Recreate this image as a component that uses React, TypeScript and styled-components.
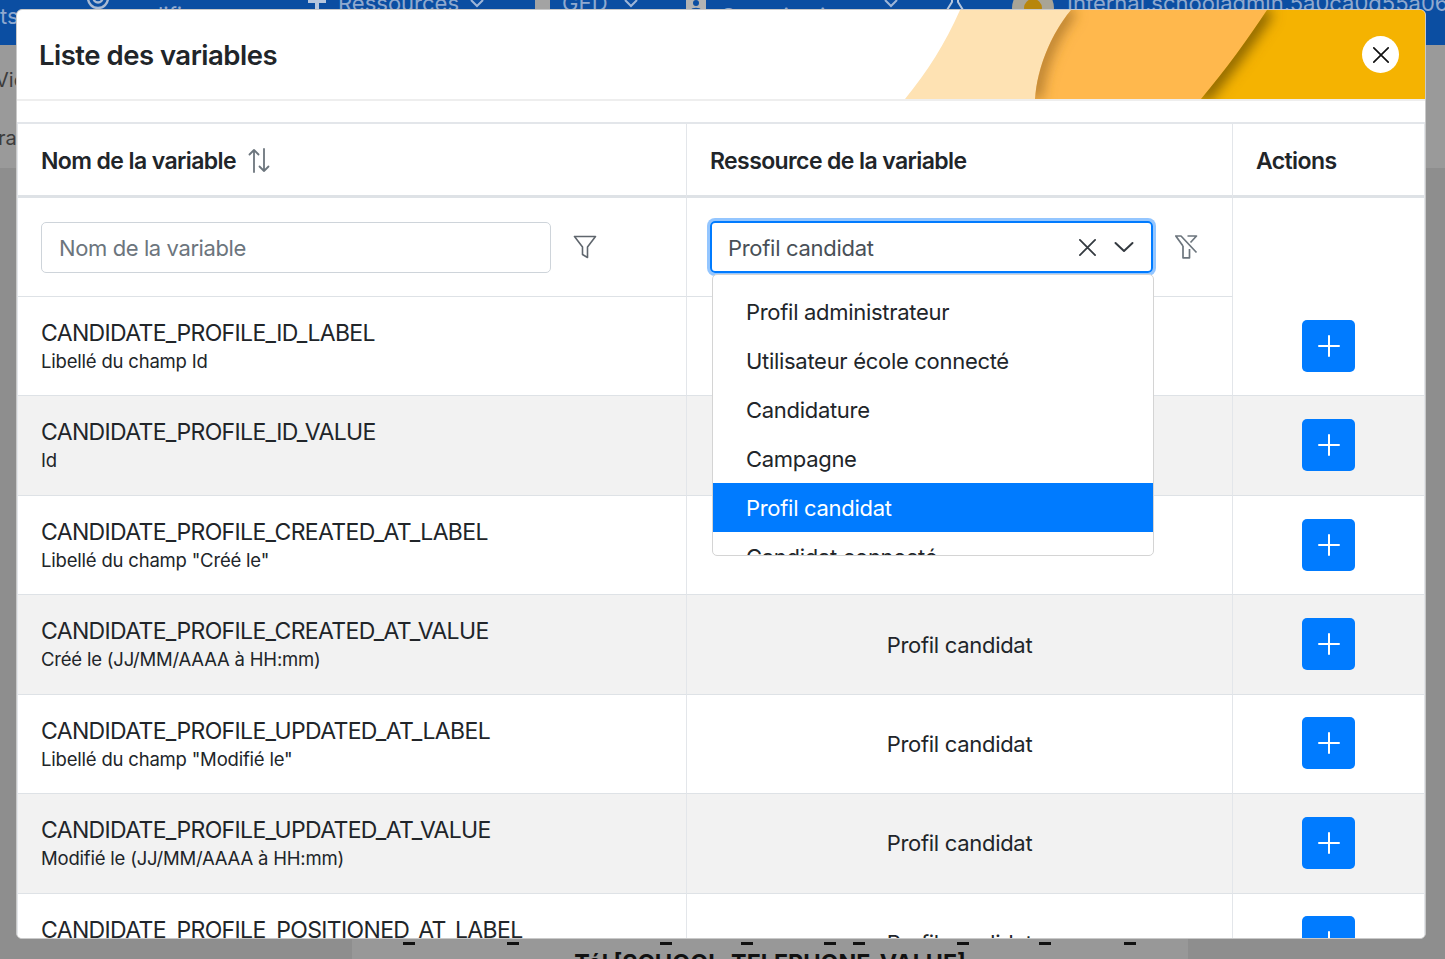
import React from 'react';
import styled, { createGlobalStyle } from 'styled-components';

const GlobalStyle = createGlobalStyle`
  html, body {
    margin: 0;
    padding: 0;
    height: 100%;
    overflow: hidden;
    background: #8e8e8e;
    font-family: Inter, "Liberation Sans", sans-serif;
    color: #212529;
  }
  * {
    box-sizing: border-box;
  }
`;

const Page = styled.div`
  position: relative;
  width: 1445px;
  height: 959px;
  overflow: hidden;
  display: flex;
  flex-direction: column;
  background: #8e8e8e;
`;

const NavBar = styled.header`
  height: 45px;
  background: #0b4ea2;
  color: #8fa9cf;
  font-size: 22px;
  overflow: hidden;
  display: flex;
  flex-shrink: 0;
`;

const NavItem = styled.span<{ $width: number; $top?: number }>`
  width: ${(p) => p.$width}px;
  flex-shrink: 0;
  margin-top: ${(p) => p.$top ?? -10}px;
  white-space: nowrap;
  line-height: 26px;
`;

const NavGlyph = styled.svg`
  display: block;
`;

const NavSquare = styled.div`
  width: 15px;
  height: 12px;
  margin-top: 10px;
  background: #a3a3a3;
`;

const TopBand = styled.div`
  height: 123px;
  background: #9a9a9a;
  flex-shrink: 0;
  color: #3c3c3c;
  font-size: 20px;
  display: flex;
  flex-direction: column;
  gap: 34px;
  padding-top: 23px;
`;

const BandText = styled.span<{ $shift: number }>`
  margin-left: ${(p) => p.$shift}px;
  line-height: 24px;
`;

const Sheet = styled.div`
  flex: 1;
  min-height: 0;
  margin: 0 257px 0 352px;
  background: #989898;
  display: flex;
  flex-direction: column;
  justify-content: flex-end;
`;

const DashRow = styled.div`
  display: flex;
  height: 3px;
  margin-bottom: 4px;
`;

const Dash = styled.span<{ $offset: number }>`
  width: 12px;
  height: 3px;
  margin-left: ${(p) => p.$offset}px;
  background: #111;
`;

const SheetText = styled.div`
  font-size: 23.3px;
  line-height: 28px;
  font-weight: 700;
  color: #111;
  white-space: nowrap;
  text-align: center;
  margin-bottom: -18px;
`;

const Modal = styled.div`
  position: absolute;
  left: 16px;
  top: 9px;
  width: 1410px;
  height: 930px;
  background: #fff;
  border: 1px solid #c9c9c9;
  border-radius: 6px;
  overflow: hidden;
  display: flex;
  flex-direction: column;
`;

const ModalHeader = styled.div`
  position: relative;
  height: 91px;
  flex-shrink: 0;
  border-bottom: 2px solid #eeeeee;
  display: flex;
  align-items: center;
  justify-content: space-between;
  padding: 0 26px 0 22px;
`;

const ModalTitle = styled.h1`
  position: relative;
  margin: 0;
  font-size: 27.5px;
  font-weight: 600;
  letter-spacing: -0.5px;
  color: #212529;
`;

const Wave = styled.svg`
  position: absolute;
  right: 0;
  top: 0;
  width: 520px;
  height: 89px;
`;

const CloseButton = styled.button`
  position: relative;
  width: 37px;
  height: 37px;
  border: 0;
  padding: 0;
  border-radius: 50%;
  background: #fff;
  display: flex;
  align-items: center;
  justify-content: center;
`;

const Table = styled.div`
  margin-top: 21px;
  position: relative;
  display: grid;
  grid-template-columns: 669px 546px 191px;
  border-top: 2px solid #e3e6ea;
  border-left: 1px solid #e3e6ea;
  border-right: 1px solid #e3e6ea;
`;

const HeadCell = styled.div`
  height: 74px;
  border-bottom: 3px solid #dee2e6;
  border-right: 1px solid #e3e6ea;
  font-size: 23px;
  font-weight: 600;
  letter-spacing: -0.6px;
  padding: 2px 23px 0;
  display: flex;
  align-items: center;
  gap: 12px;
  &:nth-child(3n) {
    border-right: 0;
  }
`;

const FilterCell = styled.div<{ $last?: boolean }>`
  height: 99px;
  border-bottom: ${(p) => (p.$last ? '0' : '1px solid #dee2e6')};
  border-right: ${(p) => (p.$last ? '0' : '1px solid #e3e6ea')};
  padding: 0 22px 0 23px;
  display: flex;
  align-items: center;
  gap: 22px;
`;

const TextFilter = styled.input`
  width: 510px;
  height: 51px;
  border: 1px solid #ced4da;
  border-radius: 5px;
  font: inherit;
  font-size: 22px;
  letter-spacing: -0.4px;
  padding: 2px 17px 0;
  color: #495057;
  &::placeholder {
    color: #6c757d;
    opacity: 1;
  }
`;

const SelectBox = styled.div`
  width: 443px;
  height: 52px;
  border: 2px solid #007bff;
  box-shadow: 0 0 0 3px #94c6ff;
  border-radius: 5px;
  font-size: 22px;
  letter-spacing: -0.3px;
  color: #495057;
  padding: 0 17px 0 16px;
  display: flex;
  align-items: center;
`;

const SelectValue = styled.span`
  flex: 1;
  padding-top: 2px;
`;

const SelectIcons = styled.span`
  display: flex;
  align-items: center;
  gap: 17px;
`;

const Menu = styled.ul`
  position: absolute;
  left: 694px;
  top: 150px;
  width: 442px;
  height: 282px;
  margin: 0;
  padding: 12px 0 0;
  list-style: none;
  background: #fff;
  border: 1px solid #d4d4d4;
  border-radius: 5px;
  overflow: hidden;
  z-index: 2;
`;

const MenuOption = styled.li<{ $active?: boolean }>`
  height: 49px;
  line-height: 51px;
  padding-left: 33px;
  font-size: 22px;
  letter-spacing: -0.3px;
  white-space: nowrap;
  color: ${(p) => (p.$active ? '#fff' : '#212529')};
  background: ${(p) => (p.$active ? '#007bff' : 'transparent')};
`;

const Cell = styled.div<{ $shaded: boolean }>`
  height: 99.45px;
  background: ${(p) => (p.$shaded ? '#f2f2f2' : '#fff')};
  border-bottom: 1px solid #dee2e6;
  border-right: 1px solid #e3e6ea;
`;

const NameCell = styled(Cell)`
  padding: 23px 23px 0;
`;

const VarName = styled.div`
  font-size: 23px;
  line-height: 27px;
  letter-spacing: -0.65px;
  color: #212529;
`;

const VarLabel = styled.div`
  font-size: 18.5px;
  line-height: 28px;
  letter-spacing: -0.2px;
  color: #212529;
`;

const ResourceCell = styled(Cell)`
  display: flex;
  align-items: center;
  justify-content: center;
  font-size: 22px;
  letter-spacing: -0.3px;
  color: #212529;
`;

const ActionCell = styled(Cell)`
  border-right: 0;
  display: flex;
  align-items: center;
  padding: 0 0 1px 69px;
`;

const AddButton = styled.button`
  width: 53px;
  height: 52px;
  border: 0;
  padding: 0;
  border-radius: 5px;
  background: #007bff;
  display: flex;
  align-items: center;
  justify-content: center;
`;

const rows = [
  ['CANDIDATE_PROFILE_ID_LABEL', 'Libellé du champ Id'],
  ['CANDIDATE_PROFILE_ID_VALUE', 'Id'],
  ['CANDIDATE_PROFILE_CREATED_AT_LABEL', 'Libellé du champ "Créé le"'],
  ['CANDIDATE_PROFILE_CREATED_AT_VALUE', 'Créé le (JJ/MM/AAAA à HH:mm)'],
  ['CANDIDATE_PROFILE_UPDATED_AT_LABEL', 'Libellé du champ "Modifié le"'],
  ['CANDIDATE_PROFILE_UPDATED_AT_VALUE', 'Modifié le (JJ/MM/AAAA à HH:mm)'],
  ['CANDIDATE_PROFILE_POSITIONED_AT_LABEL', 'Libellé du champ "Positionné le"'],
];

const options = [
  'Profil administrateur',
  'Utilisateur école connecté',
  'Candidature',
  'Campagne',
  'Profil candidat',
  'Candidat connecté',
];

const dashOffsets = [51, 92, 141, 69, 71, 17, 92, 70, 73];

const CrossIcon = ({ size, color }: { size: number; color: string }) => (
  <svg width={size} height={size} viewBox="0 0 20 20" fill="none" stroke={color} strokeWidth="1.9" strokeLinecap="round">
    <path d="M2 2 L18 18 M18 2 L2 18" />
  </svg>
);

const PlusIcon = () => (
  <svg width="24" height="24" viewBox="0 0 24 24" fill="none" stroke="#fff" strokeWidth="2" strokeLinecap="round">
    <path d="M12 2 V22 M2 12 H22" />
  </svg>
);

const ChevronIcon = () => (
  <svg width="20" height="12" viewBox="0 0 20 12" fill="none" stroke="#343a40" strokeWidth="2" strokeLinecap="round" strokeLinejoin="round">
    <path d="M1.5 2 L10 10 L18.5 2" />
  </svg>
);

const NavChevron = () => (
  <NavGlyph width="14" height="10" viewBox="0 0 14 10" fill="none" stroke="#9fb6d8" strokeWidth="2">
    <path d="M1 0 L7 6 L13 0" />
  </NavGlyph>
);

const SortIcon = () => (
  <svg width="22" height="25" viewBox="0 0 22 25" fill="none" stroke="#6c757d" strokeWidth="1.8" strokeLinecap="round" strokeLinejoin="round">
    <path d="M6 24 V2 M1.5 6.5 L6 2 L10.5 6.5" />
    <path d="M16 1 V23 M11.5 18.5 L16 23 L20.5 18.5" />
  </svg>
);

const FunnelIcon = () => (
  <svg width="24" height="24" viewBox="0 0 24 24" fill="none" stroke="#5f666d" strokeWidth="1.6" strokeLinejoin="round">
    <path d="M1.5 1.5 H22.5 L14.5 12 V22.5 L9.5 19.5 V12 Z" />
  </svg>
);

const FunnelClearIcon = () => (
  <svg width="24" height="24" viewBox="0 0 24 24" fill="none" stroke="#6c757d" strokeWidth="1.7" strokeLinejoin="round">
    <path d="M8 11 L0.8 1 H6 L21.5 17.5" />
    <path d="M8 11 V22.8 H14.5 V14" />
    <path d="M12.5 1 H21.5 L15.5 7.5" />
  </svg>
);

const App: React.FC = () => {
  return (
    <Page>
      <GlobalStyle />
      <NavBar>
        <NavItem $width={86} $top={3}>
          ts
        </NavItem>
        <NavItem $width={72} $top={-14}>
          <NavGlyph width="24" height="24" viewBox="0 0 24 24" fill="none" stroke="#a9bad3" strokeWidth="2.4">
            <circle cx="12" cy="12" r="10" />
            <circle cx="12" cy="12" r="4.5" />
          </NavGlyph>
        </NavItem>
        <NavItem $width={150} $top={2}>
          lifi
        </NavItem>
        <NavItem $width={30} $top={0}>
          <NavGlyph width="18" height="10" viewBox="0 0 18 10" fill="#b6c6dd">
            <path d="M0 0 H18 V3 H11 V10 H7 V3 H0 Z" />
          </NavGlyph>
        </NavItem>
        <NavItem $width={132}>Ressources</NavItem>
        <NavItem $width={65} $top={0}>
          <NavChevron />
        </NavItem>
        <NavItem $width={27} $top={-10}>
          <NavSquare />
        </NavItem>
        <NavItem $width={62}>GED</NavItem>
        <NavItem $width={62} $top={0}>
          <NavChevron />
        </NavItem>
        <NavItem $width={34} $top={0}>
          <NavGlyph width="20" height="10" viewBox="0 0 20 10" fill="#b3b3b3">
            <rect width="20" height="10" />
            <circle cx="10" cy="3" r="3" fill="#0b4ea2" />
            <path d="M5 10 C5 7 15 7 15 10 Z" fill="#0b4ea2" />
          </NavGlyph>
        </NavItem>
        <NavItem $width={164} $top={3}>
          Organisation
        </NavItem>
        <NavItem $width={62} $top={0}>
          <NavChevron />
        </NavItem>
        <NavItem $width={65} $top={0}>
          <NavGlyph width="18" height="10" viewBox="0 0 18 10" fill="none" stroke="#b6c6dd" strokeWidth="2">
            <path d="M6 0 V2 L1 10 M12 0 V2 L17 10" />
          </NavGlyph>
        </NavItem>
        <NavItem $width={56} $top={-14}>
          <NavGlyph width="44" height="30" viewBox="0 0 44 30">
            <circle cx="22" cy="22" r="21" fill="#a8a496" />
            <circle cx="22" cy="22" r="9" fill="#b8860b" />
          </NavGlyph>
        </NavItem>
        <NavItem $width={378}>Internal.schooladmin.5a0ca0d55a064</NavItem>
      </NavBar>
      <TopBand>
        <BandText $shift={-5}>Vie</BandText>
        <BandText $shift={-2}>ra</BandText>
      </TopBand>
      <Sheet>
        <DashRow>
          {dashOffsets.map((offset, i) => (
            <Dash key={i} $offset={offset} />
          ))}
        </DashRow>
        <SheetText>Tél [SCHOOL_TELEPHONE_VALUE]</SheetText>
      </Sheet>

      <Modal>
        <ModalHeader>
          <Wave viewBox="0 0 520 89" preserveAspectRatio="none">
            <defs>
              <clipPath id="orangeClip">
                <path d="M130 89 C132 58 146 24 166 0 H520 V89 Z" />
              </clipPath>
              <clipPath id="amberClip">
                <path d="M296 89 C322 58 342 30 362 0 H520 V89 Z" />
              </clipPath>
              <filter id="soft" x="-50%" y="-50%" width="200%" height="200%">
                <feGaussianBlur stdDeviation="7" />
              </filter>
            </defs>
            <path d="M0 89 C22 62 40 34 55 0 H520 V89 Z" fill="#fee2b3" />
            <path d="M130 89 C132 58 146 24 166 0 H520 V89 Z" fill="#ffb84d" />
            <g clipPath="url(#orangeClip)">
              <path d="M130 89 C132 58 146 24 166 0" fill="none" stroke="#a9752c" strokeWidth="12" filter="url(#soft)" />
            </g>
            <path d="M296 89 C322 58 342 30 362 0 H520 V89 Z" fill="#f5b301" />
            <g clipPath="url(#amberClip)">
              <path d="M296 89 C322 58 342 30 362 0" fill="none" stroke="#7d5a04" strokeWidth="14" filter="url(#soft)" />
            </g>
          </Wave>
          <ModalTitle>Liste des variables</ModalTitle>
          <CloseButton aria-label="Fermer">
            <CrossIcon size={18} color="#111" />
          </CloseButton>
        </ModalHeader>

        <Table>
          <HeadCell>
            Nom de la variable
            <SortIcon />
          </HeadCell>
          <HeadCell>Ressource de la variable</HeadCell>
          <HeadCell>Actions</HeadCell>

          <FilterCell>
            <TextFilter placeholder="Nom de la variable" readOnly />
            <FunnelIcon />
          </FilterCell>
          <FilterCell>
            <SelectBox>
              <SelectValue>Profil candidat</SelectValue>
              <SelectIcons>
                <CrossIcon size={19} color="#343a40" />
                <ChevronIcon />
              </SelectIcons>
            </SelectBox>
            <FunnelClearIcon />
          </FilterCell>
          <FilterCell $last />

          {rows.map(([name, label], i) => (
            <React.Fragment key={name}>
              <NameCell $shaded={i % 2 === 1}>
                <VarName>{name}</VarName>
                <VarLabel>{label}</VarLabel>
              </NameCell>
              <ResourceCell $shaded={i % 2 === 1}>Profil candidat</ResourceCell>
              <ActionCell $shaded={i % 2 === 1}>
                <AddButton aria-label="Ajouter">
                  <PlusIcon />
                </AddButton>
              </ActionCell>
            </React.Fragment>
          ))}

          <Menu>
            {options.map((option) => (
              <MenuOption key={option} $active={option === 'Profil candidat'}>
                {option}
              </MenuOption>
            ))}
          </Menu>
        </Table>
      </Modal>
    </Page>
  );
};

export default App;
